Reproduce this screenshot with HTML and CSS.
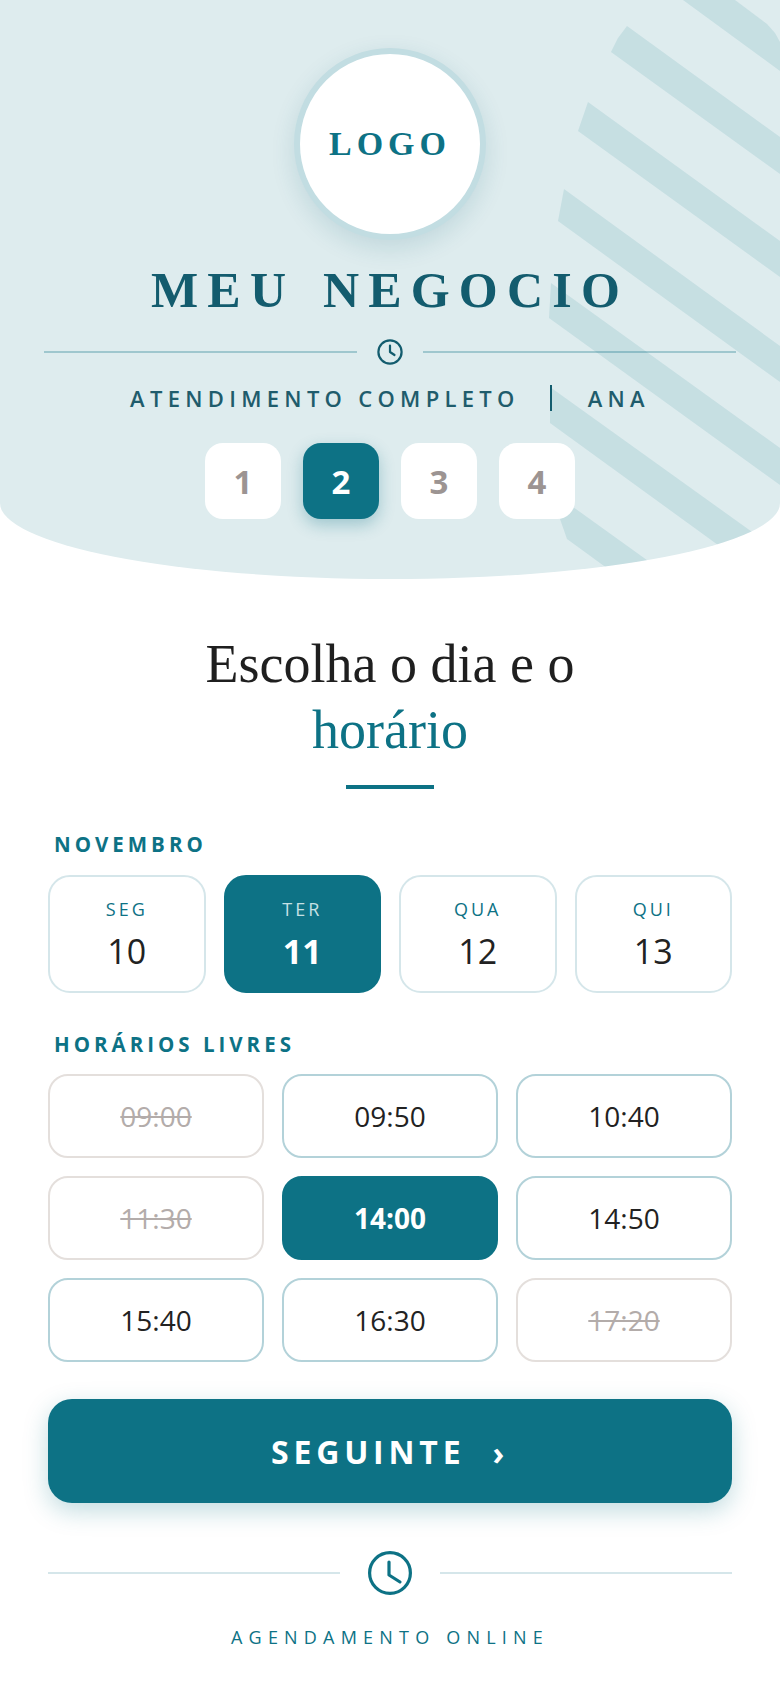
FILE: index.html
```html
<!DOCTYPE html>
<html lang="pt">
<head>
<meta charset="utf-8">
<title>Meu Negocio</title>
<link rel="stylesheet" href="styles.css">
</head>
<body>
<div class="page">
  <header class="hero">
    <svg class="stripes" viewBox="0 0 780 580" aria-hidden="true">
      <polygon points="683,0 735,0 767,24 775,33 780,42 780,71"/>
      <polygon points="627,26 780,137 780,174 611,52 618,38"/>
      <polygon points="588,102 780,241 780,277 578,131"/>
      <polygon points="564,189 780,346 780,382 558,221"/>
      <polygon points="551,283 780,448 780,485 549,318"/>
      <polygon points="550,387 780,552 780,590 550,423"/>
      <polygon points="555,494 722,614 670,614 567,539 560,519"/>
    </svg>
    <div class="logo"><span class="logo-text">LOGO</span></div>
    <h1 class="brand">MEU NEGOCIO</h1>
    <div class="divider">
      <span class="divider-line"></span>
      <svg class="clock-small" viewBox="0 0 26 26" aria-hidden="true"><circle cx="13" cy="13" r="11.6"/><polyline points="13,6.5 13,13 17.5,16"/></svg>
      <span class="divider-line"></span>
    </div>
    <p class="service"><span>ATENDIMENTO COMPLETO</span><i class="sep"></i><span>ANA</span></p>
    <ol class="steps">
      <li class="step">1</li>
      <li class="step step-active">2</li>
      <li class="step">3</li>
      <li class="step">4</li>
    </ol>
  </header>

  <main class="content">
    <h2 class="headline">Escolha o dia e o<br><em>horário</em></h2>
    <div class="headline-bar"></div>

    <h3 class="label label-month">NOVEMBRO</h3>
    <div class="days">
      <div class="day"><span class="day-name">SEG</span><span class="day-num">10</span></div>
      <div class="day day-active"><span class="day-name">TER</span><span class="day-num">11</span></div>
      <div class="day"><span class="day-name">QUA</span><span class="day-num">12</span></div>
      <div class="day"><span class="day-name">QUI</span><span class="day-num">13</span></div>
    </div>

    <h3 class="label label-hours">HORÁRIOS LIVRES</h3>
    <div class="slots">
      <div class="slot slot-off">09:00</div>
      <div class="slot">09:50</div>
      <div class="slot">10:40</div>
      <div class="slot slot-off">11:30</div>
      <div class="slot slot-active">14:00</div>
      <div class="slot">14:50</div>
      <div class="slot">15:40</div>
      <div class="slot">16:30</div>
      <div class="slot slot-off">17:20</div>
    </div>

    <button class="next" type="button"><span>SEGUINTE</span><span class="chev">›</span></button>

    <div class="foot-divider">
      <span class="foot-line"></span>
      <svg class="clock-large" viewBox="0 0 44 44" aria-hidden="true"><circle cx="22" cy="22" r="20.4"/><polyline points="21,11 21,24 32,31"/></svg>
      <span class="foot-line"></span>
    </div>
    <p class="foot-text">AGENDAMENTO ONLINE</p>
  </main>
</div>
</body>
</html>
```
FILE: styles.css
```css
* { box-sizing: border-box; }
html, body { margin: 0; padding: 0; background: #fff; }
body { font-family: "Open Sans", "Liberation Sans", sans-serif; color: #222; }
.page { width: 780px; height: 1688px; overflow: hidden; }

.hero {
  position: relative;
  height: 579px;
  padding-top: 48px;
  background: #deecee;
  border-radius: 0 0 50% 50% / 0 0 76px 76px;
  overflow: hidden;
  display: flex;
  flex-direction: column;
  align-items: center;
}
.stripes { position: absolute; left: 0; top: 0; width: 780px; height: 580px; }
.stripes polygon { fill: #0d7285; fill-opacity: .11; }

.logo {
  position: relative;
  width: 192px;
  height: 192px;
  border: 6px solid #c2dde2;
  border-radius: 50%;
  background: #fff;
  box-shadow: 0 8px 24px rgba(13, 90, 110, .14);
  display: flex;
  align-items: center;
  justify-content: center;
}
.logo-text {
  font-family: "Liberation Serif", serif;
  font-weight: 700;
  font-size: 34px;
  letter-spacing: 5px;
  color: #0d7285;
}
.brand {
  position: relative;
  margin: 20px 0 0;
  font-family: "Liberation Serif", serif;
  font-weight: 700;
  font-size: 50px;
  line-height: 60px;
  letter-spacing: 9.2px;
  word-spacing: 6px;
  color: #135c6e;
  white-space: nowrap;
}
.divider {
  position: relative;
  width: 692px;
  margin-top: 19px;
  display: flex;
  align-items: center;
  gap: 20px;
}
.divider-line { flex: 1; height: 2px; background: rgba(13, 114, 133, .3); }
.clock-small { width: 26px; height: 26px; fill: none; stroke: #135c6e; stroke-width: 2.2; stroke-linecap: round; stroke-linejoin: round; }
.service {
  position: relative;
  margin: 17px 0 0;
  display: flex;
  align-items: center;
  font-size: 22px;
  font-weight: 600;
  line-height: 32px;
  letter-spacing: 5.3px;
  color: #1f5c6c;
  white-space: nowrap;
}
.sep { display: block; width: 2px; height: 26px; margin: 0 36px 0 30px; background: #135c6e; }
.steps {
  position: relative;
  margin: 29px 0 0;
  padding: 0;
  list-style: none;
  display: flex;
  gap: 22px;
}
.step {
  width: 76px;
  height: 76px;
  border-radius: 18px;
  background: #fff;
  color: #9c9492;
  font-size: 33px;
  font-weight: 700;
  display: flex;
  align-items: center;
  justify-content: center;
}
.step-active { background: #0d7285; color: #fff; box-shadow: 0 6px 16px rgba(13, 114, 133, .3); }

.content { padding: 0 48px; }
.headline {
  margin: 52px 0 0;
  text-align: center;
  font-family: "Liberation Serif", serif;
  font-weight: 400;
  font-size: 54px;
  line-height: 66px;
  color: #1f1f1f;
}
.headline em { font-style: normal; color: #0d7285; }
.headline-bar { width: 88px; height: 4px; margin: 22px auto 0; background: #0d7285; }

.label {
  margin: 0;
  padding-left: 6px;
  font-size: 20.5px;
  line-height: 26px;
  font-weight: 700;
  letter-spacing: 4px;
  color: #0d7285;
}
.label-month { margin-top: 42px; }
.label-hours { margin-top: 38px; }

.days {
  display: grid;
  grid-template-columns: repeat(4, 1fr);
  gap: 18px;
  margin-top: 18px;
}
.day {
  height: 118px;
  border: 2px solid #d5e6ea;
  border-radius: 22px;
  background: #fff;
  display: flex;
  flex-direction: column;
  align-items: center;
  padding-top: 19px;
}
.day-name { font-size: 18px; line-height: 26px; letter-spacing: 3px; color: #0d7285; }
.day-num { font-size: 34px; line-height: 46px; margin-top: 6px; color: #222; }
.day-active { background: #0d7285; border-color: #0d7285; }
.day-active .day-name { color: #c6e0e4; }
.day-active .day-num { color: #fff; font-weight: 700; }

.slots {
  display: grid;
  grid-template-columns: repeat(3, 1fr);
  gap: 18px;
  margin-top: 17px;
}
.slot {
  height: 84px;
  border: 2px solid #b3d2d9;
  border-radius: 20px;
  background: #fff;
  font-size: 28px;
  color: #222;
  display: flex;
  align-items: center;
  justify-content: center;
}
.slot-off { border-color: #e4dfdc; color: #b3acaa; text-decoration: line-through; }
.slot-active { background: #0d7285; border-color: #0d7285; color: #fff; font-weight: 700; }

.next {
  display: flex;
  align-items: center;
  justify-content: center;
  width: 100%;
  height: 104px;
  margin-top: 37px;
  border: 0;
  border-radius: 24px;
  background: #0d7285;
  box-shadow: 0 8px 24px rgba(13, 114, 133, .25);
  color: #fff;
  font-family: inherit;
  font-size: 32px;
  font-weight: 700;
  letter-spacing: 4.8px;
}
.chev { margin-left: 27px; margin-top: 2px; }

.foot-divider {
  display: flex;
  align-items: center;
  gap: 28px;
  margin-top: 48px;
}
.foot-line { flex: 1; height: 2px; background: #d5e6ea; }
.clock-large { width: 44px; height: 44px; fill: none; stroke: #0d7285; stroke-width: 3.2; stroke-linecap: round; stroke-linejoin: round; }
.foot-text {
  margin: 28px 0 0;
  text-align: center;
  font-size: 18px;
  line-height: 28px;
  letter-spacing: 6.2px;
  color: #0d7285;
}
```
